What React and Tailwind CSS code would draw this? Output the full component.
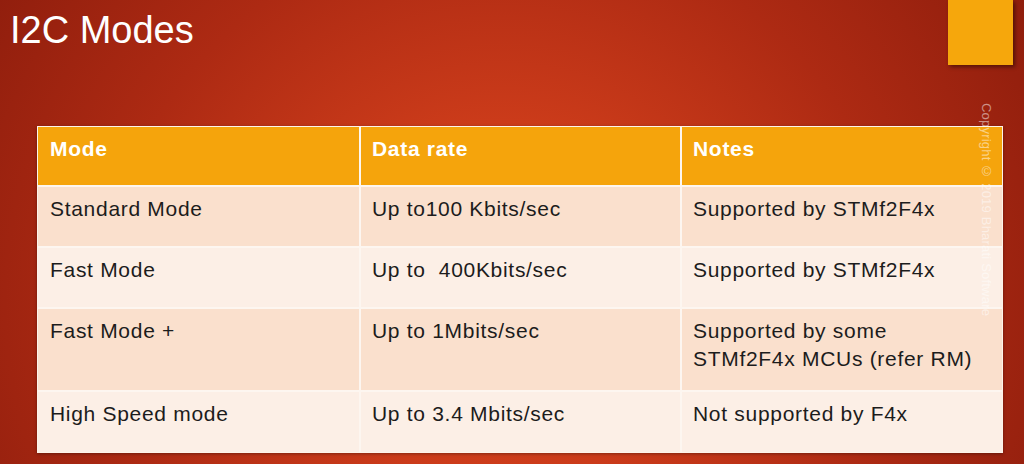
const rows = [
  { mode: 'Standard Mode', rate: 'Up to100 Kbits/sec', notes: ['Supported by STMf2F4x'], h: 'h-[59px]', bg: 'bg-[#fae0cd]' },
  { mode: 'Fast Mode', rate: 'Up to  400Kbits/sec', notes: ['Supported by STMf2F4x'], h: 'h-[59px]', bg: 'bg-[#fcefe6]' },
  { mode: 'Fast Mode +', rate: 'Up to 1Mbits/sec', notes: ['Supported by some', 'STMf2F4x MCUs (refer RM)'], h: 'h-[81px]', bg: 'bg-[#fae0cd]' },
  { mode: 'High Speed mode', rate: 'Up to 3.4 Mbits/sec', notes: ['Not supported by F4x'], h: 'h-[60px]', bg: 'bg-[#fcefe6]' },
];

export default function App() {
  return (
    <div className="relative w-[1024px] h-[464px] overflow-hidden font-['Liberation_Sans',Arial,sans-serif] bg-[radial-gradient(ellipse_62%_130%_at_49%_65%,#d8451c_0%,#cb3b1a_30%,#ad2a13_62%,#8c1c0c_100%)]">
      <h1 className="pl-[10px] pt-[11px] text-[38px] leading-[38px] text-white">I2C Modes</h1>

      <div className="ml-[37px] mt-[77px] w-[966px] border border-[#fdf3ea] bg-[#fdf6f0] shadow-[0_1px_3px_rgba(0,0,0,0.35)]">
        <div className="grid grid-cols-[321px_319px_320px] gap-[2px] text-[21px] leading-[28px] tracking-[0.7px]">
          <div className="h-[58px] bg-[#f5a40c] pl-3 pt-2 font-bold text-white">Mode</div>
          <div className="h-[58px] bg-[#f5a40c] pl-[11px] pt-2 font-bold text-white">Data rate</div>
          <div className="h-[58px] bg-[#f5a40c] pl-[11px] pt-2 font-bold text-white">Notes</div>
          {rows.map(r => (
            <div key={r.mode} className="contents">
              <div className={r.h + ' ' + r.bg + ' pl-3 pt-2 text-[#1c1c1c]'}>{r.mode}</div>
              <div className={r.h + ' ' + r.bg + ' pl-[11px] pt-2 text-[#1c1c1c] whitespace-pre'}>{r.rate}</div>
              <div className={r.h + ' ' + r.bg + ' pl-[11px] pt-2 text-[#1c1c1c]'}>
                {r.notes.map(n => <div key={n}>{n}</div>)}
              </div>
            </div>
          ))}
        </div>
      </div>

      {/* corner accent */}
      <div className="absolute left-[948px] top-0 w-[65px] h-[65px] bg-[#f6a70c] shadow-[2px_2px_4px_rgba(0,0,0,0.45)]" />

      {/* watermark */}
      <div className="absolute left-[980px] top-[103px] text-[13px] leading-[13px] tracking-[0.2px] text-white/50 [writing-mode:vertical-rl] whitespace-nowrap">
        Copyright © 2019 Bharati Software
      </div>
    </div>
  );
}
